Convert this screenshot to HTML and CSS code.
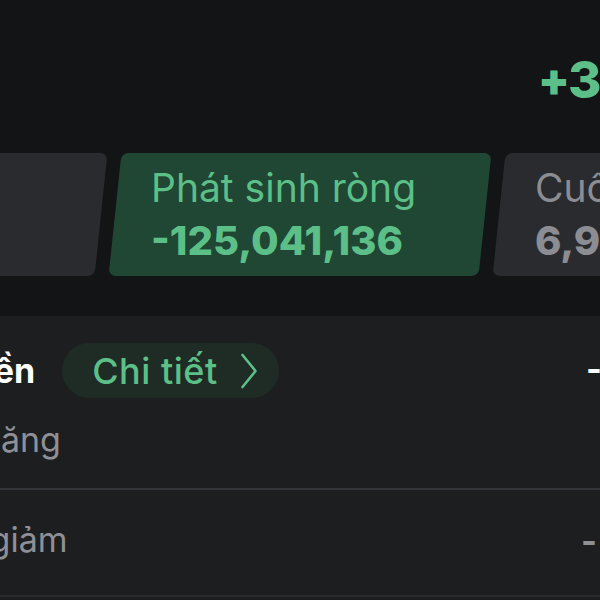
FILE: index.html
```html
<!DOCTYPE html>
<html lang="vi">
<head>
<meta charset="utf-8">
<link rel="stylesheet" href="styles.css">
</head>
<body>
<div class="page">
  <div class="header">
    <span class="total"><span class="sign">+</span>3,512,000</span>
  </div>
  <div class="cards">
    <div class="card card-gray">
      <div class="card-title">Đầu kỳ</div>
      <div class="card-value">7,036,914</div>
    </div>
    <div class="card card-green">
      <div class="card-title">Phát sinh ròng</div>
      <div class="card-value">-125,041,136</div>
    </div>
    <div class="card card-gray">
      <div class="card-title">Cuối kỳ</div>
      <div class="card-value">6,911,873</div>
    </div>
  </div>
  <div class="section">
    <div class="row row-head">
      <div class="label-group">
        <span class="head-label">Dòng tiền</span>
        <a class="pill">
          <span>Chi tiết</span>
          <svg class="chev" width="18" height="36" viewBox="0 0 18 36"><path d="M2.5 2 L15.5 18 L2.5 34" fill="none" stroke="currentColor" stroke-width="2.6" stroke-linecap="round" stroke-linejoin="round"/></svg>
        </a>
      </div>
      <span class="value value-head">-125,041,136</span>
    </div>
    <div class="row row-sub">
      <div class="label-group"><span class="sub-label">Số tiền tăng</span></div>
      <span class="value value-sub"></span>
    </div>
    <div class="divider"></div>
    <div class="row row-sub row-last">
      <div class="label-group"><span class="sub-label">Số tiền giảm</span></div>
      <span class="value value-sub">-</span>
    </div>
    <div class="divider divider-bottom"></div>
  </div>
</div>
</body>
</html>
```
FILE: styles.css
```css
html, body {
  margin: 0;
  padding: 0;
  background: #131416;
  overflow: hidden;
  width: 600px;
  height: 600px;
}
.page {
  font-family: Inter, "Noto Sans", sans-serif;
  white-space: nowrap;
}
.header {
  height: 153px;
  box-sizing: border-box;
  padding-top: 50px;
  padding-left: 538px;
}
.total {
  font-size: 51px;
  line-height: 58px;
  font-weight: 800;
  color: #5cbf88;
  letter-spacing: -1px;
}
.sign {
  font-size: 46px;
  font-weight: 900;
  vertical-align: 2px;
  letter-spacing: 0;
  margin-right: -2px;
}
.cards {
  display: flex;
  gap: 14px;
  margin-left: -269px;
  height: 123px;
  margin-bottom: 40px;
}
.card {
  flex: 0 0 370px;
  height: 123px;
  position: relative;
  box-sizing: border-box;
  padding: 12px 0 0 36px;
  z-index: 0;
}
.card::before {
  content: "";
  position: absolute;
  inset: 0;
  transform: skewX(-6deg);
  border-radius: 7px;
  z-index: -1;
}
.card-gray::before { background: #2a2b2f; }
.card-green::before { background: #204634; }
.card-title {
  font-size: 39px;
  line-height: 46px;
  font-weight: 400;
}
.card-value {
  font-size: 40px;
  line-height: 48px;
  font-weight: 800;
  margin-top: 6px;
}
.card-green .card-title, .card-green .card-value { color: #5cbf88; }
.card-gray .card-title, .card-gray .card-value { color: #8b8d92; }

.section {
  background: #1d1e20;
  padding-top: 27px;
  height: 284px;
  box-sizing: border-box;
}
.row {
  display: grid;
  grid-template-columns: 710px auto;
  margin-left: -124px;
  align-items: center;
}
.label-group {
  display: flex;
  align-items: center;
}
.head-label {
  font-size: 34px;
  font-weight: 700;
  color: #ffffff;
  line-height: 55px;
}
.pill {
  display: flex;
  align-items: center;
  gap: 22px;
  height: 55px;
  box-sizing: border-box;
  padding: 0 21px 0 30px;
  margin-left: 27px;
  border-radius: 28px;
  background: #1f2c26;
  color: #5cbf88;
  font-size: 36px;
  letter-spacing: 0.5px;
  font-weight: 500;
}
.chev { display: block; }
.value-head {
  font-size: 34px;
  font-weight: 700;
  color: #ffffff;
}
.sub-label {
  font-size: 34px;
  color: #8e9095;
  line-height: 44px;
}
.row-sub {
  margin-top: 20px;
  margin-left: -131px;
  grid-template-columns: 712px auto;
}
.value-sub {
  font-size: 34px;
  font-weight: 700;
  color: #8e9095;
}
.divider {
  height: 2px;
  background: #323437;
  margin-top: 26px;
}
.row-last { margin-top: 28px; }
.divider-bottom { margin-top: 33px; background: #2a2b2e; }
```
